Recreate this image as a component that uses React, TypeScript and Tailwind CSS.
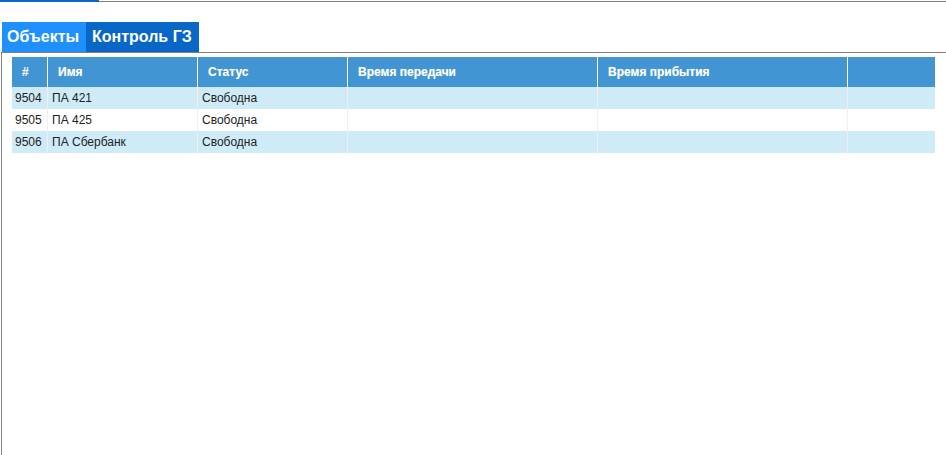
import React from 'react';

const cols = 'grid grid-cols-[36px_150px_150px_250px_250px_87px]';

const headers = ['#', 'Имя', 'Статус', 'Время передачи', 'Время прибытия', ''];

const rows = [
	{ id: '9504', name: 'ПА 421', status: 'Свободна' },
	{ id: '9505', name: 'ПА 425', status: 'Свободна' },
	{ id: '9506', name: 'ПА Сбербанк', status: 'Свободна' },
];

export default function App() {
	return (
		<div className="h-screen flex flex-col bg-white font-['Liberation_Sans',Arial,sans-serif]">
			{/* top strip */}
			<div className="flex h-[2px]">
				<div className="w-[99px] h-[2px] bg-[#0a66c2]" />
				<div className="flex-1 mt-px h-px bg-[#808080]" />
			</div>

			{/* tabs */}
			<div className="flex mt-[20px] ml-[2px] h-[30px]">
				<div className="px-[5px] flex items-center bg-[#1e90ff] text-white text-[16px] font-bold w-[84px]">
					Объекты
				</div>
				<div className="px-[6px] flex items-center bg-[#0866c6] text-white text-[16px] font-bold w-[113px]">
					Контроль ГЗ
				</div>
			</div>

			{/* panel */}
			<div className="flex-1 ml-px border-t border-l border-[#808080] pl-[10px] pt-[4px]">
				<div className="w-[923px] text-[12px]">
					<div className={`${cols} h-[30px] bg-[#4195d3] text-white font-bold`}>
						{headers.map((h, i) => (
							<div
								key={i}
								className={`flex items-center border-r border-white ${i === 0 ? 'pl-[10px]' : 'pl-[10px]'} [text-shadow:0_0_1px_rgba(255,255,255,0.4)] last:border-r-0`}
							>
								{h}
							</div>
						))}
					</div>
					{rows.map((r, idx) => (
						<div
							key={r.id}
							className={`${cols} h-[22px] text-[#222] ${idx % 2 === 0 ? 'bg-[#d0ebf8]' : 'bg-white'}`}
						>
							<div className="flex items-center pl-[3px] border-r border-[#f0f0f0]">{r.id}</div>
							<div className="flex items-center pl-[4px] border-r border-[#f0f0f0]">{r.name}</div>
							<div className="flex items-center pl-[4px] border-r border-[#f0f0f0]">{r.status}</div>
							<div className="border-r border-[#f0f0f0]" />
							<div className="border-r border-[#f0f0f0]" />
							<div />
						</div>
					))}
				</div>
			</div>
		</div>
	);
}
